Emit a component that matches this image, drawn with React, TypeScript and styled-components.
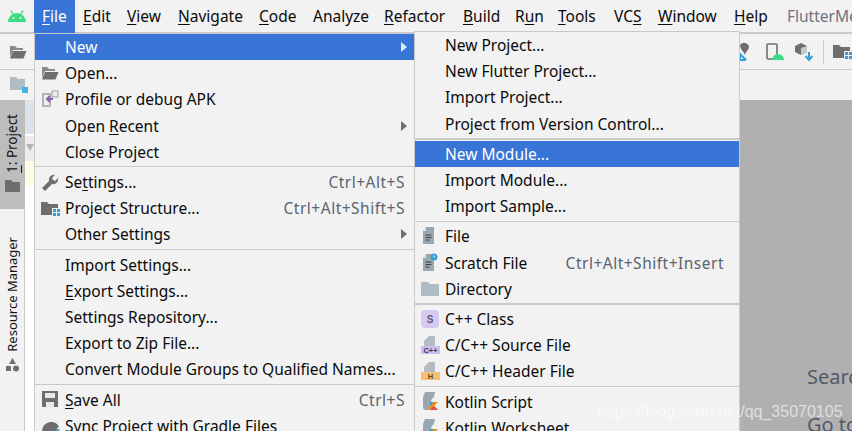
import React from 'react';
import styled, { createGlobalStyle } from 'styled-components';

const GlobalStyle = createGlobalStyle`
  html, body { margin: 0; padding: 0; background: #f2f2f2; }
  * { box-sizing: border-box; }
  u { text-underline-offset: 2px; text-decoration-thickness: 1px; }
`;

const FONT = `"Noto Sans", "Open Sans", sans-serif`;

const Screen = styled.div`
  width: 852px;
  height: 431px;
  position: relative;
  overflow: hidden;
  background: #f2f2f2;
  font-family: ${FONT};
  font-size: 15.5px;
  color: #0a0a0a;
  display: flex;
  flex-direction: column;
`;

const MenuBar = styled.div`
  height: 34px;
  flex-shrink: 0;
  display: flex;
  align-items: stretch;
  border-bottom: 2px solid #c9c9c9;
`;

const AppLogo = styled.div`
  width: 34px;
  flex-shrink: 0;
  display: flex;
  align-items: center;
  justify-content: center;
`;

const MenuTitle = styled.div<{ $active?: boolean; $w: number }>`
  width: ${p => p.$w}px;
  flex-shrink: 0;
  height: 33px;
  line-height: 33px;
  padding-left: 8px;
  white-space: nowrap;
  background: ${p => (p.$active ? '#3875d6' : 'transparent')};
  color: ${p => (p.$active ? '#fff' : '#0a0a0a')};
`;

const ProjectTitle = styled.div`
  line-height: 33px;
  margin-left: 8px;
  color: #6b7580;
  white-space: nowrap;
`;

const ToolBar = styled.div`
  height: 36px;
  flex-shrink: 0;
  display: flex;
  align-items: center;
  justify-content: space-between;
  padding: 0 0 0 9px;
  border-bottom: 1px solid #c9c9c9;
`;

const ToolGroup = styled.div`
  display: flex;
  align-items: center;
  gap: 9px;
`;

const ToolDivider = styled.div`
  width: 1px;
  height: 24px;
  background: #c9c9c9;
`;

const NavBar = styled.div`
  height: 30px;
  flex-shrink: 0;
  display: flex;
  align-items: center;
  padding-left: 9px;
`;

const Workspace = styled.div`
  flex: 1;
  display: flex;
  min-height: 0;
`;

const Stripe = styled.div`
  width: 25px;
  flex-shrink: 0;
  background: #f2f2f2;
  border-right: 1px solid #c9c9c9;
  display: flex;
  flex-direction: column;
  align-items: center;
`;

const StripeTab = styled.div<{ $active?: boolean }>`
  width: 25px;
  display: flex;
  flex-direction: column;
  align-items: center;
  background: ${p => (p.$active ? '#bdbdbd' : 'transparent')};
`;

const ProjectTab = styled(StripeTab)`
  height: 109px;
  padding-top: 14px;
  gap: 7px;
`;

const ManagerTab = styled(StripeTab)`
  margin-top: 28px;
  gap: 6px;
`;

const VerticalLabel = styled.div`
  writing-mode: vertical-rl;
  transform: rotate(180deg);
  font-size: 13.5px;
  line-height: 20px;
  white-space: nowrap;
  color: #141414;
`;

const ManagerLabel = styled(VerticalLabel)`
  font-size: 13px;
`;

const ProjectPanel = styled.div`
  width: 9px;
  flex-shrink: 0;
  background: #fff;
  display: flex;
  flex-direction: column;
`;

const PanelHeader = styled.div`
  height: 34px;
  margin-bottom: 2px;
  background: #dde3ec;
`;

const PanelTreeRow = styled.div`
  height: 25px;
  background: #ededed;
  display: flex;
  justify-content: flex-end;
  padding-top: 8px;
  &::after {
    content: '';
    width: 0;
    height: 0;
    border-top: 7px solid #b4b4b4;
    border-left: 4px solid transparent;
    border-right: 4px solid transparent;
  }
`;

const PanelRow = styled.div`
  height: 25px;
  background: #fdfde6;
`;

const CenterGap = styled.div`
  flex: 1;
`;

const Editor = styled.div`
  width: 113px;
  flex-shrink: 0;
  background: #b0b0b0;
  display: flex;
  flex-direction: column;
  padding: 265px 0 0 68px;
  font-size: 20px;
  line-height: 24px;
  color: #4f5a66;
  white-space: nowrap;
`;

const EditorHint = styled.div`
  margin-bottom: 24px;
`;

const Menu = styled.div`
  position: absolute;
  background: #f2f2f2;
  border: 1px solid #c9c9c9;
`;

const FileMenu = styled(Menu)`
  left: 34px;
  top: 33px;
  width: 381px;
  height: 420px;
`;

const Item = styled.div<{ $active?: boolean }>`
  height: 26.2px;
  display: flex;
  align-items: center;
  position: relative;
  padding: 0 9px 0 30px;
  white-space: nowrap;
  background: ${p => (p.$active ? '#3875d6' : 'transparent')};
  color: ${p => (p.$active ? '#fff' : '#0a0a0a')};
`;

const ItemIcon = styled.span`
  position: absolute;
  left: 5px;
  top: 3px;
  width: 20px;
  height: 20px;
  display: flex;
  align-items: center;
  justify-content: center;
`;

const Shortcut = styled.span`
  margin-left: auto;
  padding-left: 20px;
  letter-spacing: 0.5px;
  color: #5a6470;
`;

const NewMenu = styled(Menu)`
  left: 414px;
  top: 31px;
  width: 326px;
  height: 420px;
  ${Item} {
    padding-right: 15px;
  }
`;

const Arrow = styled.span<{ $active?: boolean }>`
  position: absolute;
  right: 7px;
  top: 8px;
  width: 0;
  height: 0;
  border-left: 6px solid ${p => (p.$active ? '#dfe8f7' : '#6e6e6e')};
  border-top: 5px solid transparent;
  border-bottom: 5px solid transparent;
`;

const Separator = styled.div<{ $thick?: boolean }>`
  height: 4px;
  display: flex;
  align-items: center;
  &::after {
    content: '';
    width: 100%;
    height: ${p => (p.$thick ? 2 : 1)}px;
    background: #c9c9c9;
  }
`;

const Watermark = styled.div`
  position: absolute;
  left: 597px;
  top: 402px;
  font-family: "Liberation Sans", sans-serif;
  font-size: 16px;
  line-height: 20px;
  color: rgba(255, 255, 255, 0.62);
  white-space: nowrap;
`;

const AndroidHead = ({ w = 20, h = 14 }: { w?: number; h?: number }) => (
  <svg width={w} height={h} viewBox="0 0 20 14">
    <path d="M1 13a9 9 0 0 1 18 0z" fill="#3ddc84" />
    <path d="M4 1.5 6.5 6M16 1.5 13.500 6" stroke="#3ddc84" strokeWidth="1.4" />
    <circle cx="6.500" cy="9" r="1" fill="#f2f2f2" />
    <circle cx="13.500" cy="9" r="1" fill="#f2f2f2" />
  </svg>
);

const OpenFolder = () => (
  <svg width="18" height="14" viewBox="0 0 18 14">
    <path d="M1 1h5l2 2h6v2H4L1 12z" fill="#8a8a8a" />
    <path d="M4 6h13.500l-3 7.500H1z" fill="#6e6e6e" />
  </svg>
);

const StructureFolder = () => (
  <svg width="19" height="15" viewBox="0 0 19 15">
    <path d="M0 1h6l2 2h9v4h-6v7H0z" fill="#6e6e6e" />
    <path d="M12 8h3v3h-3zM16 8h3v3h-3zM12 12h3v3h-3zM16 12h3v3h-3z" fill="#389fd6" />
  </svg>
);

const DocLines = ({ badge }: { badge?: boolean }) => (
  <svg width="18" height="20" viewBox="0 0 18 20">
    <path d="M5 1h8v17H2V5z" fill="#9aa7b0" />
    <path d="M2 5h3V1z" fill="#dfe3e6" />
    <path d="M4.500 9h6M4.500 11.500h6M4.500 14h4" stroke="#3c3f41" strokeWidth="1" />
    {badge && <circle cx="13" cy="4" r="3.500" fill="#389fd6" />}
    {badge && <path d="M13 2.500V4l1 .8" stroke="#fff" strokeWidth=".8" fill="none" />}
  </svg>
);

const CppDoc = ({ label, color, text }: { label: string; color: string; text: string }) => (
  <svg width="20" height="20" viewBox="0 0 20 20">
    <path d="M9 1h6v10H4V6z" fill="#b4bcc2" />
    <rect x="1" y="11" width="19" height="8" fill={color} />
    <text x="10.500" y="17.500" fontSize="7.500" fontWeight="700" textAnchor="middle" fontFamily="Liberation Sans" fill={text}>{label}</text>
  </svg>
);

const KotlinDoc = () => (
  <svg width="20" height="20" viewBox="0 0 20 20">
    <path d="M5 1h10l-1 5c-2 1-3 3-3 6v7H6c-2 0-3-1-3-3V6z" fill="#9aa7b0" />
    <path d="M10 19v-8l8 0-4 4 4 4z" fill="#f88909" />
    <path d="M10 11h4l-4 4z" fill="#389fd6" />
    <path d="M10 19l4-4 4 4z" fill="#e44857" />
  </svg>
);

const Menus = [
  ['Edit', 'E', 44], ['View', 'V', 51], ['Navigate', 'N', 81], ['Code', 'C', 54], ['Analyze', '', 71],
  ['Refactor', 'R', 79], ['Build', 'B', 52], ['Run', 'u', 43], ['Tools', 'T', 56], ['VCS', 'S', 44],
  ['Window', 'W', 76], ['Help', 'H', 53],
] as const;

// wraps the mnemonic letter of a label in <u>
const mnemonic = (label: string, key: string) => {
  const at = key ? label.indexOf(key) : -1;
  if (at < 0) return label;
  return <>{label.slice(0, at)}<u>{key}</u>{label.slice(at + 1)}</>;
};

export default function App() {
  return (
    <Screen>
      <GlobalStyle />
      <MenuBar>
        <AppLogo><AndroidHead /></AppLogo>
        <MenuTitle $active $w={41}>{mnemonic('File', 'F')}</MenuTitle>
        {Menus.map(([label, key, w]) => (
          <MenuTitle key={label} $w={w}>{mnemonic(label, key)}</MenuTitle>
        ))}
        <ProjectTitle>FlutterMe</ProjectTitle>
      </MenuBar>
      <ToolBar>
        <OpenFolder />
        <ToolGroup>
          <svg width="20" height="20" viewBox="0 0 20 20">
            <path d="M4 3a5 5 0 0 1 9 2c0 3-4 5-4 8-1-3-5-6-5-10z" fill="#6e6e6e" />
            <path d="M3 11l7 7M10 18H4v-5" stroke="#389fd6" strokeWidth="2" fill="none" />
          </svg>
          <svg width="20" height="20" viewBox="0 0 20 20">
            <rect x="2" y="2" width="10" height="15" rx="1" fill="none" stroke="#6e6e6e" strokeWidth="1.600" />
            <path d="M7 18a6 6 0 0 1 12 0z" fill="#3ddc84" />
          </svg>
          <svg width="20" height="20" viewBox="0 0 20 20">
            <path d="M7 1l6 3v6l-6 3-6-3V4z" fill="#6e6e6e" />
            <path d="M7 6l6-2v6l-6 3z" fill="#c8c8c8" />
            <path d="M15 10v7M11.500 14l3.500 4 3.500-4" stroke="#389fd6" strokeWidth="2" fill="none" />
          </svg>
          <ToolDivider />
          <StructureFolder />
        </ToolGroup>
      </ToolBar>
      <NavBar>
        <svg width="20" height="18" viewBox="0 0 20 18">
          <path d="M1 1h6l2 2h7v11H1z" fill="#aebcc6" />
          <rect x="13" y="11" width="6" height="6" fill="#40b6e0" />
        </svg>
      </NavBar>
      <Workspace>
        <Stripe>
          <ProjectTab $active>
            <VerticalLabel><u>1</u>: Project</VerticalLabel>
            <svg width="15" height="12" viewBox="0 0 15 12">
              <path d="M0 0h6l2 2h7v10H0z" fill="#6e6e6e" />
            </svg>
          </ProjectTab>
          <ManagerTab>
            <ManagerLabel>Resource Manager</ManagerLabel>
            <svg width="15" height="14" viewBox="0 0 15 14">
              <path d="M7.500 0l3.500 6H4z" fill="#6e6e6e" />
              <rect x="1" y="8" width="5" height="5" fill="#6e6e6e" />
              <circle cx="11" cy="10.500" r="3" fill="#6e6e6e" />
            </svg>
          </ManagerTab>
        </Stripe>
        <ProjectPanel>
          <PanelHeader />
          <PanelTreeRow />
          <PanelRow />
        </ProjectPanel>
        <CenterGap />
        <Editor>
          <EditorHint>Search</EditorHint>
          <EditorHint>Go to</EditorHint>
        </Editor>
      </Workspace>

      <FileMenu>
        <Item $active>New<Arrow $active /></Item>
        <Item><ItemIcon><OpenFolder /></ItemIcon>Open...</Item>
        <Item>
          <ItemIcon>
            <svg width="18" height="18" viewBox="0 0 18 18">
              <path d="M1 3h9v14H1z" fill="#b4b4b4" />
              <path d="M3 5h5v10H3z" fill="#eee" />
              <path d="M11 1h6v6h-6z" fill="#eee" stroke="#9a9a9a" />
              <path d="M12 9H6M9 6 6 9l3 3" stroke="#8a5fb0" strokeWidth="2" fill="none" />
            </svg>
          </ItemIcon>
          Profile or debug APK
        </Item>
        <Item><span>Open <u>R</u>ecent</span><Arrow /></Item>
        <Item>Close Project</Item>
        <Separator />
        <Item>
          <ItemIcon>
            <svg width="18" height="18" viewBox="0 0 18 18">
              <path d="M1 15l7-7a5 5 0 0 1 6-6l-3 3 1 2 2 1 3-3a5 5 0 0 1-6 6l-7 7z" fill="#6e6e6e" />
            </svg>
          </ItemIcon>
          <span>Se<u>t</u>tings...</span><Shortcut>Ctrl+Alt+S</Shortcut>
        </Item>
        <Item>
          <ItemIcon><StructureFolder /></ItemIcon>
          Project Structure...<Shortcut>Ctrl+Alt+Shift+S</Shortcut>
        </Item>
        <Item>Other Settings<Arrow /></Item>
        <Separator />
        <Item>Import Settings...</Item>
        <Item><span><u>E</u>xport Settings...</span></Item>
        <Item>Settings Repository...</Item>
        <Item>Export to Zip File...</Item>
        <Item>Convert Module Groups to Qualified Names...</Item>
        <Separator />
        <Item>
          <ItemIcon>
            <svg width="16" height="16" viewBox="0 0 16 16">
              <path d="M0 0h16v16H0z" fill="#6e6e6e" />
              <path d="M3 2h10v5H3zM4 11h8v5H4z" fill="#e8e8e8" />
            </svg>
          </ItemIcon>
          <span><u>S</u>ave All</span><Shortcut>Ctrl+S</Shortcut>
        </Item>
        <Item>
          <ItemIcon>
            <svg width="19" height="16" viewBox="0 0 19 16">
              <path d="M1 14c0-6 4-10 9-10 4 0 7 2 8 5l-2 1v5H1z" fill="#6e6e6e" />
              <path d="M11 13l3 3 4-5" stroke="#389fd6" strokeWidth="2" fill="none" />
            </svg>
          </ItemIcon>
          Sync Project with Gradle Files
        </Item>
      </FileMenu>

      <NewMenu>
        <Item>New Project...</Item>
        <Item>New Flutter Project...</Item>
        <Item>Import Project...</Item>
        <Item>Project from Version Control...</Item>
        <Separator $thick />
        <Item $active>New Module...</Item>
        <Item>Import Module...</Item>
        <Item>Import Sample...</Item>
        <Separator />
        <Item><ItemIcon><DocLines /></ItemIcon>File</Item>
        <Item><ItemIcon><DocLines badge /></ItemIcon>Scratch File<Shortcut>Ctrl+Alt+Shift+Insert</Shortcut></Item>
        <Item>
          <ItemIcon>
            <svg width="19" height="15" viewBox="0 0 19 15">
              <path d="M0 1h7l2 2h9v12H0z" fill="#aebcc6" />
            </svg>
          </ItemIcon>
          Directory
        </Item>
        <Separator $thick />
        <Item>
          <ItemIcon>
            <svg width="18" height="18" viewBox="0 0 18 18">
              <rect width="18" height="18" rx="4" fill="#d7c9f2" />
              <text x="9" y="13" fontSize="10" fontWeight="700" textAnchor="middle" fontFamily="Liberation Sans" fill="#5c5c72">S</text>
            </svg>
          </ItemIcon>
          C++ Class
        </Item>
        <Item><ItemIcon><CppDoc label="C++" color="#cdbcf0" text="#3c3c50" /></ItemIcon>C/C++ Source File</Item>
        <Item><ItemIcon><CppDoc label="H" color="#f4bf75" text="#5c4a20" /></ItemIcon>C/C++ Header File</Item>
        <Separator />
        <Item><ItemIcon><KotlinDoc /></ItemIcon>Kotlin Script</Item>
        <Item><ItemIcon><KotlinDoc /></ItemIcon>Kotlin Worksheet</Item>
      </NewMenu>

      <Watermark>https://blog.csdn.net/qq_35070105</Watermark>
    </Screen>
  );
}
